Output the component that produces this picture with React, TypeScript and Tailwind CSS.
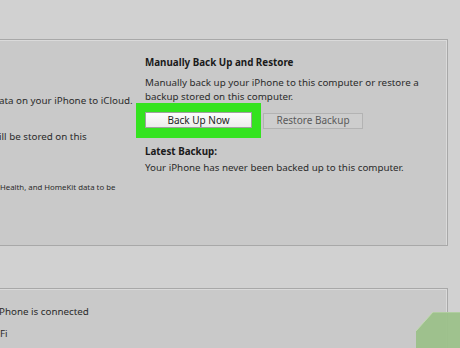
import React from "react";

export default function App() {
  return (
    <div
      className="relative w-[460px] h-[348px] overflow-hidden bg-[#d1d1d1] text-[#2b2b2b]"
      style={{ fontFamily: '"Noto Sans", "Open Sans", sans-serif' }}
    >
      <div className="h-[39px]" />

      {/* backup panel */}
      <div className="flex w-[448px] h-[207px] border-t border-r border-b border-[#a8a8a8] bg-[#c9c9c9] shadow-[inset_0_1px_0_#dadada,inset_-1px_0_0_#dadada]">
        <div className="w-[145px] shrink-0 overflow-hidden">
          <p className="mt-[54px] -ml-[1px] whitespace-nowrap text-[9.8px] leading-[14px]">
            ata on your iPhone to iCloud.
          </p>
          <p className="mt-[22px] -ml-[1px] whitespace-nowrap text-[9.8px] leading-[14px]">
            ill be stored on this
          </p>
          <p className="mt-[38px] whitespace-nowrap text-[7.8px] leading-[10px]">
            Health, and HomeKit data to be
          </p>
        </div>

        <div className="pt-[16px]">
          <h2 className="text-[9.8px] font-bold leading-[14px] text-[#1a1a1a]">
            Manually Back Up and Restore
          </h2>
          <p className="mt-[6px] text-[9.8px] leading-[14px]">
            Manually back up your iPhone to this computer or restore a
            <br />
            backup stored on this computer.
          </p>

          <div className="mt-[-1px] flex items-center">
            <div className="-ml-[9px] bg-[#34e31f] pt-[9px] pb-[10px] px-[9px]">
              <button className="flex h-[16px] w-[107px] items-center justify-center border border-[#a0a0a0] bg-gradient-to-b from-[#fdfdfd] to-[#ececec] text-[10px] text-[#1e1e1e]">
                Back Up Now
              </button>
            </div>
            <button className="ml-[2px] flex h-[16px] w-[100px] items-center justify-center border border-[#b3b3b3] bg-[#cdcdcd] text-[10px] text-[#5a5a5a]">
              Restore Backup
            </button>
          </div>

          <h3 className="mt-[7px] text-[9.8px] font-bold leading-[14px] text-[#1a1a1a]">
            Latest Backup:
          </h3>
          <p className="mt-[2px] text-[9.8px] leading-[14px]">
            Your iPhone has never been backed up to this computer.
          </p>
        </div>
      </div>

      <div className="h-[42px]" />

      {/* options panel */}
      <div className="w-[448px] h-[80px] border-t border-r border-[#a8a8a8] bg-[#c9c9c9] shadow-[inset_0_1px_0_#dadada,inset_-1px_0_0_#dadada]">
        <p className="mt-[16px] -ml-[1px] whitespace-nowrap text-[9.8px] leading-[14px]">
          Phone is connected
        </p>
        <p className="mt-[8px] whitespace-nowrap text-[9.8px] leading-[14px]">Fi</p>
      </div>

      {/* green corner overlay */}
      <svg className="absolute left-[416px] top-[312px]" width="44" height="36" viewBox="0 0 44 36">
        <polygon points="17,0 44,0 44,36 0,36 0,19" fill="#9cc18a" fillOpacity="0.95" />
        <polyline points="0,19 17,0 44,0" fill="none" stroke="#c2d9b2" strokeWidth="1" />
      </svg>
    </div>
  );
}
